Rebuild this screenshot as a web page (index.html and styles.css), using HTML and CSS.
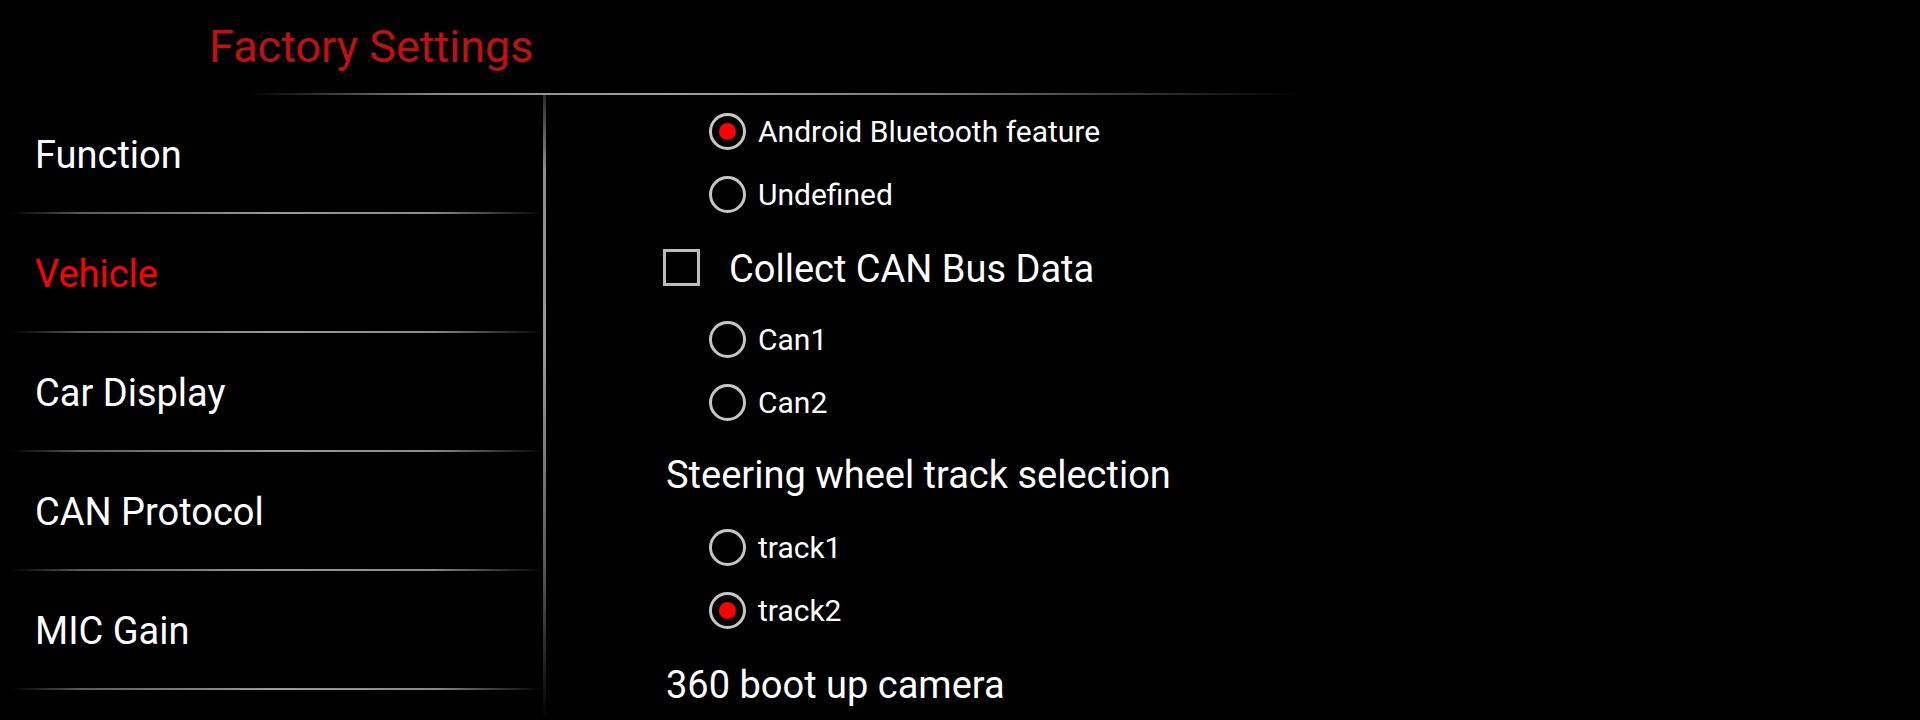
FILE: index.html
```html
<!DOCTYPE html>
<html lang="en">
<head>
<meta charset="utf-8">
<title>Factory Settings</title>
<link rel="stylesheet" href="styles.css">
</head>
<body>
<div class="app">
  <header class="topbar">
    <h1 class="title">Factory Settings</h1>
  </header>
  <div class="title-rule"></div>
  <div class="main">
    <nav class="menu">
      <div class="menu-item">Function</div>
      <div class="menu-item active">Vehicle</div>
      <div class="menu-item">Car Display</div>
      <div class="menu-item">CAN Protocol</div>
      <div class="menu-item">MIC Gain</div>
    </nav>
    <div class="vdivider"></div>
    <section class="content">
      <div class="radio-row"><span class="radio checked"></span><span class="radio-label">Android Bluetooth feature</span></div>
      <div class="radio-row"><span class="radio"></span><span class="radio-label">Undefined</span></div>
      <div class="check-row"><span class="checkbox"></span><span class="check-label">Collect CAN Bus Data</span></div>
      <div class="radio-row"><span class="radio"></span><span class="radio-label">Can1</span></div>
      <div class="radio-row"><span class="radio"></span><span class="radio-label">Can2</span></div>
      <div class="section-header">Steering wheel track selection</div>
      <div class="radio-row"><span class="radio"></span><span class="radio-label">track1</span></div>
      <div class="radio-row"><span class="radio checked"></span><span class="radio-label">track2</span></div>
      <div class="section-header last">360 boot up camera</div>
    </section>
  </div>
</div>
</body>
</html>
```
FILE: styles.css
```css
* { box-sizing: border-box; }
html, body {
  margin: 0;
  padding: 0;
  background: #000;
}
body {
  width: 1920px;
  height: 720px;
  overflow: hidden;
  font-family: Roboto, "Noto Sans", "Liberation Sans", sans-serif;
  color: #fff;
}
.app {
  display: flex;
  flex-direction: column;
  height: 720px;
}
.topbar {
  height: 93px;
  flex: none;
}
.title {
  margin: 0;
  padding-left: 209px;
  font-size: 45px;
  font-weight: 400;
  line-height: 94px;
  color: #c01010;
}
.title-rule {
  flex: none;
  height: 2px;
  margin-left: 250px;
  width: 1050px;
  background: linear-gradient(90deg, rgba(150,150,150,0) 0%, #8a8a8a 18%, #a0a0a0 40%, #7a7a7a 65%, rgba(90,90,90,0) 100%);
}
.main {
  flex: 1;
  display: flex;
  min-height: 0;
}
.menu {
  width: 543px;
  flex: none;
  display: flex;
  flex-direction: column;
}
.menu-item {
  height: 119px;
  flex: none;
  display: flex;
  align-items: center;
  padding-left: 35px;
  padding-top: 1px;
  font-size: 38px;
  color: #fff;
  background: linear-gradient(90deg, rgba(120,120,120,0) 2%, #5a5a5a 15%, #9a9a9a 50%, #8a8a8a 80%, rgba(80,80,80,0) 100%) no-repeat left bottom / 100% 2px;
}
.menu-item.active {
  color: #ff0000;
}
.vdivider {
  width: 3px;
  flex: none;
  background: linear-gradient(180deg, #2a2a2a 0%, #8c8c8c 12%, #9a9a9a 40%, #5a5a5a 75%, rgba(40,40,40,0) 100%);
}
.content {
  flex: 1;
  display: flex;
  flex-direction: column;
  padding-top: 5px;
}
.radio-row {
  height: 63px;
  flex: none;
  display: flex;
  align-items: center;
  padding-left: 163px;
}
.radio {
  width: 37px;
  height: 37px;
  flex: none;
  border: 3px solid #c6c6c6;
  border-radius: 50%;
  display: flex;
  align-items: center;
  justify-content: center;
}
.radio.checked::after {
  content: "";
  width: 17px;
  height: 17px;
  border-radius: 50%;
  background: #ff0000;
}
.radio-label {
  margin-left: 12px;
  font-size: 30px;
  line-height: 40px;
  color: #fff;
}
.check-row {
  height: 82px;
  flex: none;
  display: flex;
  align-items: center;
  padding-left: 117px;
}
.checkbox {
  width: 37px;
  height: 37px;
  flex: none;
  border: 3px solid #bdbdbd;
}
.check-label {
  margin-left: 29px;
  font-size: 38px;
  line-height: 46px;
  padding-top: 4px;
  color: #fff;
}
.section-header {
  height: 82px;
  flex: none;
  padding-left: 120px;
  font-size: 38px;
  line-height: 82px;
  color: #fff;
}
.section-header.last {
  line-height: 86px;
}
```
